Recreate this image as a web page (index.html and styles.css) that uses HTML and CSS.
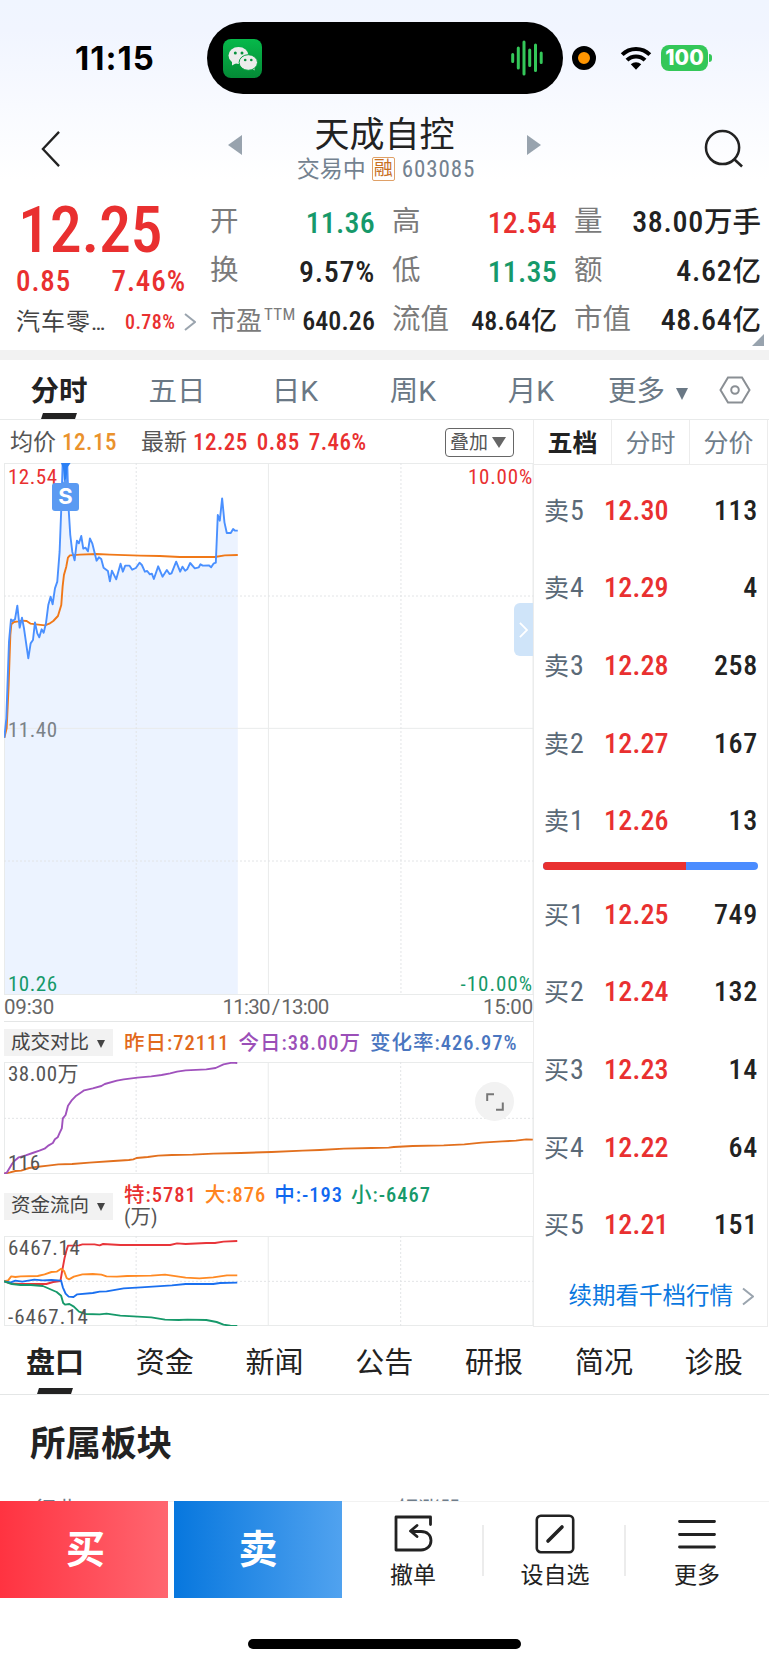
FILE: index.html
```html
<!DOCTYPE html>
<html lang="zh-CN">

<head>
    <meta charset="UTF-8">
    <meta name="viewport" content="width=device-width, initial-scale=1.0">
    <link rel="stylesheet" href="styles.css">
    <title>天成自控 603085</title>
</head>

<body>

    <header class="top">
        <div class="status">
            <span class="clock">11:15</span>
            <div class="island">
                <svg class="wechat" viewBox="0 0 39 39">
                    <defs>
                        <linearGradient id="wx" x1="0" y1="0" x2="0" y2="1">
                            <stop offset="0" stop-color="#06b94a" />
                            <stop offset="1" stop-color="#048a36" />
                        </linearGradient>
                    </defs>
                    <rect width="39" height="39" rx="8" fill="url(#wx)" />
                    <path d="M9 22l0 4.500 4.500-2.500z" fill="#ececec" />
                    <ellipse cx="15.500" cy="16.500" rx="10" ry="8.500" fill="#ececec" />
                    <circle cx="12.300" cy="14" r="1.500" fill="#06913c" />
                    <circle cx="19" cy="14" r="1.500" fill="#06913c" />
                    <path d="M28 29l3.500 2.500 0-4z" fill="#ececec" />
                    <ellipse cx="25.300" cy="23.500" rx="9.200" ry="7.800" fill="#ececec" stroke="#05a040" stroke-width="1" />
                    <circle cx="22.200" cy="21" r="1.300" fill="#06913c" />
                    <circle cx="28.300" cy="21" r="1.300" fill="#06913c" />
                </svg>
                <svg class="wave" viewBox="0 0 32 36" stroke="#34c759" stroke-width="3" stroke-linecap="round">
                    <path d="M1.700 14.500v7M7.300 8v20M13 2v32M18.700 10v15.500M24.500 5v25.500M30.200 13v9.500" />
                </svg>
            </div>
            <span class="rec"></span>
            <svg class="wifi" viewBox="0 0 32 24">
                <path d="M2.200 8.600a19.500 19.500 0 0 1 27.600 0M7 14.200a12.600 12.600 0 0 1 18 0" fill="none" stroke="#000" stroke-width="4" />
                <path d="M10.800 18.300a7.500 7.500 0 0 1 10.400 0L16 23.800z" />
            </svg>
            <span class="battery">100</span><i class="battery-nub"></i>
        </div>

        <div class="title-bar">
            <svg class="back" viewBox="0 0 22 40"><path d="M20 2L3 20l17 18" fill="none" stroke="#222" stroke-width="2.400" /></svg>
            <i class="tri left"></i>
            <div class="title">
                <h1>天成自控</h1>
                <p>交易中<span class="badge">融</span><span class="code">603085</span></p>
            </div>
            <i class="tri right"></i>
            <svg class="search" viewBox="0 0 42 40" fill="none" stroke="#222" stroke-width="2.600"><circle cx="19" cy="19" r="17" /><path d="M31 31l8 7.500" /></svg>
        </div>
    </header>

    <section class="quote">
        <div class="price-col">
            <div class="price">12.25</div>
            <div class="change"><span>0.85</span><span>7.46%</span></div>
            <div class="industry">
                <span>汽车零…</span><b>0.78%</b>
                <svg viewBox="0 0 12 18"><path d="M1 1l10 8-10 8" fill="none" stroke="#9aa4ae" stroke-width="2" /></svg>
            </div>
        </div>
        <ul class="stats">
            <li><span>开</span><b class="green">11.36</b></li>
            <li><span>高</span><b class="red">12.54</b></li>
            <li><span>量</span><b>38.00<em>万手</em></b></li>
            <li><span>换</span><b>9.57%</b></li>
            <li><span>低</span><b class="green">11.35</b></li>
            <li><span>额</span><b>4.62<em>亿</em></b></li>
            <li><span class="pe">市盈<sup>TTM</sup></span><b class="small">640.26</b></li>
            <li><span>流值</span><b class="small">48.64<em>亿</em></b></li>
            <li><span>市值</span><b>48.64<em>亿</em></b></li>
        </ul>
        <i class="corner"></i>
    </section>

    <nav class="periods">
        <span class="active">分时</span>
        <span>五日</span>
        <span>日K</span>
        <span>周K</span>
        <span>月K</span>
        <span class="more">更多<i></i></span>
        <svg viewBox="0 0 32 28" fill="none" stroke="#8a8f94" stroke-width="2"><path d="M9 1.500h14l7.500 12.500L23 26.500H9L1.500 14z" /><circle cx="16" cy="14" r="3.800" /></svg>
    </nav>

    <main class="board">
        <div class="charts">
            <div class="info">
                <span class="avg">均价<b>12.15</b></span>
                <span class="last">最新<b>12.25</b><b>0.85</b><b>7.46%</b></span>
                <span class="overlay-btn">叠加<i></i></span>
            </div>

            <div class="chart main-chart">
                <svg viewBox="12 24 1590 1596" preserveAspectRatio="none">
                    <path class="fill" d="M12 1620V848L19 790 27 560 33 493 38 498 45 493 52 452 59 518 66 488 72 520 85 610 92 565 99 555 105 502 112 535 118 547 125 523 131 533 138 505 145 450 152 425 158 448 165 400 172 380 179 290 184 160 188 24H202L206 160 211 240 217 290 224 316 231 257 237 265 244 243 250 281 257 278 264 289 270 250 277 265 290 317 297 307 304 312 311 338 324 348 330 379 336 347 349 373 362 326 369 350 376 332 389 332 397 344 408 339 419 323 426 330 435 350 442 348 450 358 456 356 462 372 475 334 488 365 501 345 509 357 515 355 529 320 541 350 548 335 556 347 562 343 571 324 585 340 597 337 602 328 609 332 627 331 634 337 641 326 648 323 654 180 660 197 667 130 674 202 681 234 693 234 700 222 706 227H714V1620z" />
                    <path class="grid" d="M12 25.500H1602M12 820H1602M806 24V1620M13.500 24V1620M1600.500 24V1620M12 1618.500H1602" />
                    <path class="grid dash" d="M12 423H1602M12 1218H1602M409 24V1620M1204 24V1620" />
                    <path class="line" stroke="#f07818" d="M13 848L20 820 26 690 31 540 34 508 42 501 55 499 66 497 80 498 92 506 108 508 135 511 148 506 160 498 174 483 184 450 188 395 192 360 199 335 204 308 210 301 240 299 290 297 330 299 420 302 480 303 540 306 645 306 675 301 714 300" />
                    <path class="line" stroke="#4a90ff" d="M13 848L19 790 27 560 33 493 38 498 45 493 52 452 59 518 66 488 72 520 85 610 92 565 99 555 105 502 112 535 118 547 125 523 131 533 138 505 145 450 152 425 158 448 165 400 172 380 179 290 184 160 188 28M202 28L206 160 211 240 217 290 224 316 231 257 237 265 244 243 250 281 257 278 264 289 270 250 277 265 290 317 297 307 304 312 311 338 324 348 330 379 336 347 349 373 362 326 369 350 376 332 389 332 397 344 408 339 419 323 426 330 435 350 442 348 450 358 456 356 462 372 475 334 488 365 501 345 509 357 515 355 529 320 541 350 548 335 556 347 562 343 571 324 585 340 597 337 602 328 609 332 627 331 634 337 641 326 648 323 654 180 660 197 667 130 674 202 681 234 693 234 700 222 706 227H714" />
                    <path d="M183 24h29l-10 14-2 42h-8l-3-42z" fill="#2b80f5" />
                    <path d="M188 84l9-12 9 12z" fill="#5a9af2" />
                </svg>
                <span class="lbl tl red">12.54</span>
                <span class="lbl tr red">10.00%</span>
                <span class="lbl mid">11.40</span>
                <span class="lbl bl green">10.26</span>
                <span class="lbl br green">-10.00%</span>
                <span class="sell-mark">S</span>
                <span class="expand-side"><svg viewBox="0 0 10 18"><path d="M1 1l8 8-8 8" fill="none" stroke="#fff" stroke-width="2" /></svg></span>
            </div>
            <div class="times"><span>09:30</span><span class="noon">11:30<i>/</i>13:00</span><span>15:00</span></div>

            <div class="sub-head">
                <span class="chip">成交对比<i></i></span>
                <p><b class="c-orange">昨日:72111</b><b class="c-purple">今日:38.00万</b><b class="c-steel">变化率:426.97%</b></p>
            </div>
            <div class="chart vol-chart">
                <svg viewBox="12 156 1539 336" preserveAspectRatio="none">
                    <path class="grid" d="M12 157.500H1551M12 490.500H1551M13.500 156V492M780 156V492M1549.500 156V492" />
                    <path class="grid dash" d="M12 325H1551M396 156V492M1165 156V492" />
                    <path class="line" stroke="#e2701e" d="M12 491L30 487 45 483 62 482 85 474 105 471 140 467 170 463 210 462 260 458 330 453 375 450 388 448 397 444 430 441 460 437 500 435 560 434 620 431 700 429 790 426 880 422 930 420 1000 416 1080 414 1130 413 1145 411 1200 408 1290 406 1350 403 1400 398 1460 394 1500 392 1530 388 1549 389" />
                    <path class="line" stroke="#a052bd" d="M12 491L20 488 26 478 34 464 42 453 55 442 75 436 95 429 115 422 130 416 142 406 154 399 160 388 168 382 174 368 180 355 183 325 191 315 198 287 208 272 222 257 238 246 245 241 270 235 295 228 305 222 340 212 360 208 400 203 440 199 470 195 495 190 515 185 540 181 600 178 627 174 650 163 675 158 690 159" />
                </svg>
                <span class="lbl tl">38.00万</span>
                <span class="lbl bl">116</span>
                <span class="full"><svg viewBox="0 0 18 18"><path d="M1.200 8V1.200H8M16.800 9.500v7.300H10" fill="none" stroke="#777" stroke-width="2" /></svg></span>
            </div>

            <div class="sub-head tall">
                <span class="chip">资金流向<i></i></span>
                <p><b class="red">特:5781</b><b class="c-amber">大:876</b><b class="c-blue">中:-193</b><b class="green">小:-6467</b><br><span>(万)</span></p>
            </div>
            <div class="chart fund-chart">
                <svg viewBox="12 199 1539 270" preserveAspectRatio="none">
                    <path class="grid" d="M12 200.500H1551M12 467.500H1551M13.500 199V469M780 199V469M1549.500 199V469" />
                    <path class="grid dash" d="M12 335H1551M396 199V469M1165 199V469" />
                    <path class="line" stroke="#e8353a" d="M12 335L30 341 60 343 135 343 155 337 176 334 180 310 188 265 193 245 198 228 230 227 240 224 275 224 290 227 300 223 350 226 495 226 515 221 540 223 600 220 625 220 650 216 690 214" />
                    <path class="line" stroke="#ff8a24" d="M12 335L24 332 33 320 45 322 60 320 110 319 130 314 150 307 165 306 178 297 187 305 194 325 201 329 215 321 240 314 270 313 295 315 310 320 340 321 370 319 440 318 480 315 500 318 540 324 580 326 620 323 660 317 690 317" />
                    <path class="line" stroke="#1a70f0" d="M12 335L32 338 45 333 65 336 100 330 125 332 150 331 178 333 183 353 191 372 200 381 214 382 225 374 270 370 290 366 310 365 360 356 410 353 500 347 540 343 620 343 640 340 690 339" />
                    <path class="line" stroke="#16996a" d="M12 335L35 343 60 346 90 346 125 349 145 358 165 367 178 378 184 400 190 405 202 403 215 411 230 426 250 433 290 434 310 432 350 438 440 443 480 450 520 451 545 450 600 451 630 457 650 465 670 468 690 469" />
                </svg>
                <span class="lbl tl">6467.14</span>
                <span class="lbl bl">-6467.14</span>
            </div>
        </div>

        <aside class="depth">
            <div class="depth-tabs"><span class="active">五档</span><span>分时</span><span>分价</span></div>
            <ul class="levels">
                <li><span>卖<i>5</i></span><b>12.30</b><em>113</em></li>
                <li><span>卖<i>4</i></span><b>12.29</b><em>4</em></li>
                <li><span>卖<i>3</i></span><b>12.28</b><em>258</em></li>
                <li><span>卖<i>2</i></span><b>12.27</b><em>167</em></li>
                <li><span>卖<i>1</i></span><b>12.26</b><em>13</em></li>
            </ul>
            <div class="ratio"><i></i></div>
            <ul class="levels">
                <li><span>买<i>1</i></span><b>12.25</b><em>749</em></li>
                <li><span>买<i>2</i></span><b>12.24</b><em>132</em></li>
                <li><span>买<i>3</i></span><b>12.23</b><em>14</em></li>
                <li><span>买<i>4</i></span><b>12.22</b><em>64</em></li>
                <li><span>买<i>5</i></span><b>12.21</b><em>151</em></li>
            </ul>
            <div class="renew">续期看千档行情<svg viewBox="0 0 12 18"><path d="M1 1l10 8-10 8" fill="none" stroke="#9aa4ae" stroke-width="2" /></svg></div>
        </aside>
    </main>

    <nav class="tabs">
        <span class="active">盘口</span>
        <span>资金</span>
        <span>新闻</span>
        <span>公告</span>
        <span>研报</span>
        <span>简况</span>
        <span>诊股</span>
    </nav>

    <section class="sector">
        <h2>所属板块</h2>
        <div class="sector-head"><span>行业</span><span>领涨股</span></div>
    </section>

    <footer class="actions">
        <span class="trade buy">买</span>
        <span class="trade sell">卖</span>
        <div class="action">
            <svg viewBox="0 0 40 40" fill="none" stroke="#222" stroke-width="2.800" stroke-linejoin="round" stroke-linecap="round"><path d="M37.500 10.500V3H3v33h25c6 0 10-4 10-9.500S34 17.500 28 17.500H18M24 11.500l-6.500 5.500 6.500 5.500" /></svg>
            撤单
        </div>
        <div class="action">
            <svg viewBox="0 0 40 40" fill="none" stroke="#222" stroke-linecap="round"><rect x="1.800" y="1.800" width="36.400" height="36.400" rx="4" stroke-width="2.600" /><path d="M13 27L27 13" stroke-width="3.600" /></svg>
            设自选
        </div>
        <div class="action">
            <svg viewBox="0 0 40 40" fill="none" stroke="#222" stroke-width="2.800" stroke-linecap="round"><path d="M2.500 7.500h35M2.500 20.500h35M2.500 33h35" /></svg>
            更多
        </div>
    </footer>
    <div class="home-bar"></div>

</body>

</html>
```

FILE: styles.css
```css
* {
    box-sizing: border-box;
    margin: 0;
    padding: 0;
}

body {
    width: 769px;
    height: 1665px;
    overflow: hidden;
    background: #fff;
    color: #222;
    font-family: Roboto, "Noto Sans CJK SC", sans-serif;
    font-stretch: 75%;
    line-height: 1;
}

ul {
    list-style: none;
}

i, em {
    font-style: normal;
}

svg {
    display: block;
    flex: none;
}

.red { color: #e93030; }
.green { color: #16996a; }
.c-orange { color: #e26a1c; }
.c-purple { color: #9b4fb8; }
.c-steel { color: #4a76c0; }
.c-amber { color: #ff8420; }
.c-blue { color: #1068f0; }

/* status bar + title */
.top {
    height: 190px;
    background: linear-gradient(#f0f5ff 0, #f1f5ff 30px, #fff 180px);
}

.status {
    display: flex;
    align-items: center;
    height: 116px;
}

.clock {
    width: 207px;
    padding-left: 75px;
    font: 700 33px/1 Inter, sans-serif;
    letter-spacing: 1px;
    color: #000;
}

.island {
    display: flex;
    align-items: center;
    justify-content: space-between;
    width: 356px;
    height: 72px;
    padding: 0 20px 0 16px;
    border-radius: 36px;
    background: #000;
}

.wechat {
    width: 39px;
    height: 39px;
}

.wave {
    width: 32px;
    height: 36px;
}

.rec {
    width: 24px;
    height: 24px;
    margin-left: 9px;
    border: 6px solid #000;
    border-radius: 50%;
    background: #ff9500;
}

.wifi {
    width: 32px;
    height: 24px;
    margin-left: 24px;
}

.battery {
    width: 47px;
    height: 26px;
    margin-left: 9px;
    border-radius: 8px;
    background: #34c759;
    color: #fff;
    text-align: center;
    font: 800 21px/26px Inter, sans-serif;
}

.battery-nub {
    width: 3px;
    height: 8px;
    margin-left: 1px;
    border-radius: 0 4px 4px 0;
    background: #34c759;
}

.title-bar {
    display: flex;
    height: 74px;
    padding-left: 40px;
}

.back {
    width: 21px;
    height: 38px;
    margin-top: 14px;
}

.tri {
    height: 20px;
    margin-top: 19px;
    border: solid transparent;
    border-width: 10px 0;
}

.tri.left {
    margin-left: 167px;
    border-right: 14px solid #98a3ae;
}

.tri.right {
    border-left: 14px solid #98a3ae;
}

.title {
    width: 285px;
    padding-top: 2px;
    text-align: center;
}

.title h1 {
    font-size: 35px;
    font-weight: 400;
    line-height: 36px;
}

.title p {
    display: flex;
    align-items: center;
    justify-content: center;
    height: 32px;
    margin-left: 3px;
    margin-top: -1px;
    font-size: 23px;
    color: #748290;
}

.badge {
    width: 23px;
    height: 24px;
    margin: 0 7px 0 6px;
    border: 1.500px solid #dfa067;
    border-radius: 2px;
    font-size: 19px;
    line-height: 21px;
    color: #c8701f;
}

.code {
    letter-spacing: 0.900px;
}

.search {
    width: 41px;
    height: 39px;
    margin: 13px 0 0 163px;
}

/* quote */
.quote {
    position: relative;
    display: flex;
    height: 170px;
    border-bottom: 10px solid #f2f2f2;
}

.price-col {
    width: 210px;
    padding-left: 16px;
    color: #e93030;
}

.price {
    height: 74px;
    padding-top: 9px;
    padding-left: 2px;
    font-size: 64px;
    font-weight: 500;
    line-height: 64px;
    letter-spacing: -0.300px;
}

.change {
    display: flex;
    justify-content: space-between;
    width: 170px;
    font-size: 29px;
    line-height: 34px;
    font-weight: 500;
    letter-spacing: 0.900px;
}

.industry {
    display: flex;
    align-items: center;
    height: 48px;
    font-size: 24px;
    color: #444;
}

.industry span {
    width: 109px;
    white-space: nowrap;
    letter-spacing: 1px;
}

.industry b {
    width: 59px;
    font-size: 20px;
    font-weight: 500;
    letter-spacing: 0.400px;
    color: #e93030;
}

.industry svg {
    width: 12px;
    height: 18px;
}

.stats {
    display: grid;
    grid-template-columns: 165px 165px 187px;
    grid-template-rows: repeat(3, 49px);
    column-gap: 17px;
    padding-top: 8px;
}

.stats li {
    display: flex;
    align-items: center;
    justify-content: space-between;
    font-size: 28.500px;
    white-space: nowrap;
    color: #7b7b7b;
}

.stats b {
    font-size: 30px;
    font-weight: 500;
    letter-spacing: 0.200px;
}

.stats b:not(.red):not(.green) {
    color: #222;
    letter-spacing: 0.700px;
}

.stats em {
    font-size: 28.500px;
    letter-spacing: 0;
}

.stats b.small:not(.red) {
    font-size: 26px;
    letter-spacing: 0.100px;
}

.stats .small em {
    font-size: 26px;
}

.stats .pe {
    font-size: 26px;
}

.pe sup {
    font-size: 17px;
    vertical-align: 10px;
    line-height: 0;
    letter-spacing: 0.300px;
    margin-left: 2px;
}

.corner {
    position: absolute;
    right: 5px;
    bottom: 4px;
    border-left: 12px solid transparent;
    border-bottom: 12px solid #98a3ae;
}

/* period tabs */
.periods {
    display: flex;
    align-items: center;
    height: 60px;
    border-bottom: 1.500px solid #e8eaea;
    font-size: 28.500px;
    font-stretch: 100%;
    color: #6a7885;
}

.periods span {
    position: relative;
    width: 118px;
    padding-top: 4px;
    text-align: center;
    line-height: 55px;
}

.periods .active,
.tabs .active {
    font-weight: 700;
    color: #222;
}

.periods .active::after,
.tabs .active::after {
    content: "";
    position: absolute;
    left: 50%;
    bottom: 0;
    width: 34px;
    height: 6px;
    margin-left: -17px;
    background: #222;
    transform: skewX(-18deg);
}

.periods .more {
    display: flex;
    align-items: center;
    width: 111px;
    margin-left: 18px;
}

.periods .more i {
    margin: 5px 0 0 11px;
    border: solid transparent;
    border-width: 12px 6px 0;
    border-top-color: #6a7885;
}

.periods svg {
    width: 32px;
    height: 28px;
}

/* charts + order book */
.board {
    display: flex;
    height: 907px;
}

.charts {
    width: 533px;
}

.info {
    display: flex;
    align-items: center;
    height: 43px;
    padding: 2px 19px 0 10px;
    font-size: 23px;
    color: #555;
    white-space: nowrap;
}

.info b {
    margin-left: 6px;
    font-weight: 500;
    letter-spacing: 0.500px;
    color: #e93030;
}

.info b + b {
    margin-left: 9px;
}

.info .avg b {
    color: #ea922c;
}

.info .last {
    margin-left: 24px;
}

.overlay-btn {
    display: flex;
    align-items: center;
    width: 69px;
    height: 29px;
    margin-left: auto;
    padding-left: 4px;
    border: 1.500px solid #666;
    border-radius: 4px;
    font-size: 19px;
}

.overlay-btn i {
    margin-left: 4px;
    border: solid transparent;
    border-width: 11px 7px 0;
    border-top-color: #666;
}

.chart {
    position: relative;
    margin-left: 4px;
}

.chart > svg {
    width: 529.500px;
    height: 100%;
}

.main-chart { height: 532px; }
.vol-chart { height: 112px; }
.fund-chart { height: 90px; }

.fill {
    fill: #ecf3ff;
}

.grid {
    fill: none;
    stroke: #e9ebeb;
    stroke-width: 1;
    vector-effect: non-scaling-stroke;
}

.dash {
    stroke: #e2e4e6;
    stroke-dasharray: 2 2;
}

.line {
    fill: none;
    stroke-width: 1.900;
    stroke-linejoin: round;
    vector-effect: non-scaling-stroke;
}

/* value labels lie over the plots */
.lbl {
    position: absolute;
    left: 4px;
    font-size: 21px;
    letter-spacing: 0.500px;
    color: #555;
}

.lbl.red { color: #e93030; }
.lbl.green { color: #16996a; }
.lbl.tl { top: 4px; }
.lbl.mid { top: 257px; color: #7b8288; }
.lbl.bl { bottom: 0; }
.lbl.tr { left: auto; right: 0; top: 4px; letter-spacing: 0.800px; }
.lbl.br { left: auto; right: 0; bottom: 0; letter-spacing: 1px; }

.vol-chart .lbl.tl,
.fund-chart .lbl.tl {
    top: 2px;
}

.fund-chart .lbl {
    letter-spacing: 0.700px;
}

.fund-chart .lbl.bl {
    bottom: -2px;
    letter-spacing: 1px;
}

.sell-mark {
    position: absolute;
    left: 48px;
    top: 20px;
    width: 27px;
    height: 28px;
    border-radius: 3px;
    background: #5a9af2;
    color: #fff;
    font: 700 22px/27px Inter, sans-serif;
    text-align: center;
}

.expand-side {
    position: absolute;
    right: 0;
    top: 140px;
    display: flex;
    align-items: center;
    justify-content: center;
    width: 19px;
    height: 53px;
    border-radius: 6px 0 0 6px;
    background: #cfe4f9;
}

.expand-side svg {
    width: 9px;
    height: 18px;
}

.times {
    display: flex;
    justify-content: space-between;
    height: 27px;
    margin-left: 4px;
    border-bottom: 1px solid #e4e6e6;
    font-size: 20.500px;
    font-stretch: 100%;
    line-height: 25px;
    letter-spacing: -0.200px;
    color: #666;
}

.times .noon {
    padding-left: 14px;
    letter-spacing: -0.800px;
}

.times i {
    margin: 0 2px;
}

.sub-head {
    display: flex;
    align-items: center;
    height: 40px;
    margin-left: 4px;
    padding-top: 1px;
    font-size: 20.500px;
    white-space: nowrap;
}

.chip {
    display: flex;
    flex: none;
    align-items: center;
    width: 109px;
    height: 27px;
    padding-left: 7px;
    background: #f2f2f2;
    font-size: 19.500px;
    color: #444;
}

.chip i {
    margin: 2px 0 0 8px;
    border: solid transparent;
    border-width: 8px 4px 0;
    border-top-color: #444;
}

.sub-head p {
    margin-left: 11px;
    line-height: 22px;
    color: #555;
}

.sub-head b {
    margin-right: 9px;
    font-weight: 500;
    letter-spacing: 1px;
}

.tall {
    height: 62px;
}

.tall b {
    margin-right: 8px;
}

.tall .chip {
    margin-top: 1px;
}

.full {
    position: absolute;
    left: 471px;
    top: 20px;
    display: flex;
    align-items: center;
    justify-content: center;
    width: 39px;
    height: 39px;
    border-radius: 50%;
    background: #f2f2f2;
}

.full svg {
    width: 18px;
    height: 18px;
}

.depth {
    width: 235px;
    border: solid #ececec;
    border-width: 0 1px 1px;
}

.depth-tabs {
    display: flex;
    height: 45px;
    border-bottom: 1.500px solid #ececec;
    font-size: 25px;
    line-height: 47px;
    color: #6f7d8a;
    text-align: center;
}

.depth-tabs span {
    flex: 1;
    border-right: 1.500px solid #ececec;
}

.depth-tabs span:last-child {
    border-right: 0;
}

.depth-tabs .active {
    font-weight: 700;
    color: #222;
}

.levels {
    padding: 7px 9px 0 10px;
}

.levels li {
    display: flex;
    align-items: center;
    height: 77.600px;
    font-size: 25px;
}

.levels span {
    width: 60px;
    color: #5a6977;
}

.levels i {
    font-size: 28px;
    margin-left: 1px;
}

.levels b {
    font-size: 28px;
    font-weight: 500;
    letter-spacing: 0.200px;
    color: #e93030;
}

.levels em {
    margin-left: auto;
    font-size: 28px;
    font-weight: 500;
    letter-spacing: 0.700px;
}

.ratio {
    height: 8px;
    margin: 2px 9px 0;
    border-radius: 4px;
    background: #4a8cff;
    overflow: hidden;
}

.ratio i {
    display: block;
    width: 66.600%;
    height: 8px;
    background: #e93030;
}

.ratio + .levels {
    padding-top: 6px;
}

.renew {
    display: flex;
    align-items: center;
    justify-content: flex-end;
    height: 66px;
    padding-right: 13px;
    font-size: 23.500px;
    color: #0a78e0;
}

.renew svg {
    width: 12px;
    height: 19px;
    margin-left: 9px;
}

/* detail tabs */
.tabs {
    display: flex;
    height: 68px;
    border-bottom: 1px solid #e4e6e6;
    font-size: 29px;
    line-height: 73px;
    text-align: center;
}

.tabs span {
    position: relative;
    flex: none;
    width: 109.800px;
    height: 67px;
}

.sector {
    height: 106px;
    overflow: hidden;
    padding-left: 30px;
}

.sector h2 {
    height: 100px;
    font-size: 35.500px;
    line-height: 99px;
}

.sector-head {
    display: flex;
    padding-left: 4px;
    padding-top: 4px;
    font-size: 22px;
    color: #6f7d8a;
}

.sector-head span {
    width: 362px;
}

/* bottom bar */
.actions {
    display: flex;
    height: 97px;
    border-top: 1px solid #f2f2f2;
}

.trade {
    width: 168px;
    height: 97px;
    margin: -1px 6px 0 0;
    color: #fff;
    font-size: 39px;
    font-weight: 700;
    line-height: 99px;
    text-align: center;
}

.buy {
    padding-left: 3px;
    background: linear-gradient(to right, #ff3341, #ff6670);
}

.sell {
    margin-right: 0;
    background: linear-gradient(to right, #0777de, #50a2ef);
}

.action {
    position: relative;
    display: flex;
    flex-direction: column;
    align-items: center;
    gap: 10px;
    width: 142px;
    padding-top: 12px;
    font-size: 23px;
}

.action svg {
    width: 40px;
    height: 40px;
}

.action + .action::before {
    content: "";
    position: absolute;
    left: -2px;
    top: 23px;
    width: 2px;
    height: 51px;
    background: #ececec;
}

.home-bar {
    width: 273px;
    height: 10px;
    margin: 41px auto 0;
    border-radius: 5px;
    background: #000;
}
```
